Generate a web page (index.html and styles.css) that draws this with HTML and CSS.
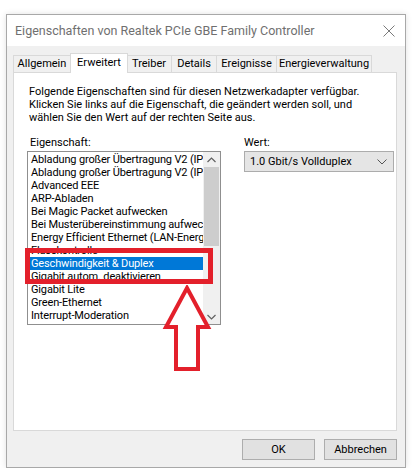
FILE: index.html
```html
<!DOCTYPE html>
<html lang="de">
<head>
    <meta charset="UTF-8">
    <meta name="viewport" content="width=device-width, initial-scale=1.0">
    <title>Eigenschaften von Realtek PCIe GBE Family Controller</title>
    <link rel="stylesheet" href="styles.css">
</head>
<body>

    <div class="window">
        <!-- Title bar -->
        <div class="titlebar">
            <span class="title">Eigenschaften von Realtek PCIe GBE Family Controller</span>
            <svg class="close" width="12" height="12" viewBox="0 0 12 12">
                <path d="M0.5 0.5 L11.5 11.5 M11.5 0.5 L0.5 11.5" stroke="#7a7a7a" stroke-width="1" fill="none"/>
            </svg>
        </div>

        <div class="body">
            <div class="tabs">
                <div class="tab t-allgemein">Allgemein</div>
                <div class="tab active t-erweitert">Erweitert</div>
                <div class="tab t-treiber">Treiber</div>
                <div class="tab t-details">Details</div>
                <div class="tab t-ereignisse">Ereignisse</div>
                <div class="tab t-energie">Energieverwaltung</div>
            </div>

            <div class="panel">
                <p class="desc">Folgende Eigenschaften sind für diesen Netzwerkadapter verfügbar.<br>
                Klicken Sie links auf die Eigenschaft, die geändert werden soll, und<br>
                wählen Sie den Wert auf der rechten Seite aus.</p>

                <div class="columns">
                    <div class="col-left">
                        <div class="label">Eigenschaft:</div>
                        <div class="listbox">
                            <ul class="items">
                                <li>Abladung großer Übertragung V2 (IPv4)</li>
                                <li>Abladung großer Übertragung V2 (IPv6)</li>
                                <li>Advanced EEE</li>
                                <li>ARP-Abladen</li>
                                <li>Bei Magic Packet aufwecken</li>
                                <li>Bei Musterübereinstimmung aufwecken</li>
                                <li>Energy Efficient Ethernet (LAN-Energiesparmodus)</li>
                                <li>Flusskontrolle</li>
                                <li class="selected">Geschwindigkeit &amp; Duplex</li>
                                <li>Gigabit autom. deaktivieren</li>
                                <li>Gigabit Lite</li>
                                <li>Green-Ethernet</li>
                                <li>Interrupt-Moderation</li>
                            </ul>
                            <div class="scrollbar">
                                <div class="arrow">
                                    <svg width="9" height="6" viewBox="0 0 9 6"><path d="M0.5 5 L4.5 1 L8.5 5" stroke="#606060" stroke-width="1.2" fill="none"/></svg>
                                </div>
                                <div class="track">
                                    <div class="thumb"></div>
                                </div>
                                <div class="arrow">
                                    <svg width="9" height="6" viewBox="0 0 9 6"><path d="M0.5 1 L4.5 5 L8.5 1" stroke="#606060" stroke-width="1.2" fill="none"/></svg>
                                </div>
                            </div>
                        </div>
                    </div>

                    <div class="col-right">
                        <div class="label">Wert:</div>
                        <div class="dropdown">
                            <span>1.0 Gbit/s Vollduplex</span>
                            <svg width="10" height="6" viewBox="0 0 10 6"><path d="M0.5 0.5 L5 5 L9.5 0.5" stroke="#555" stroke-width="1" fill="none"/></svg>
                        </div>
                    </div>
                </div>
            </div>

            <div class="buttons">
                <button class="btn">OK</button>
                <button class="btn">Abbrechen</button>
            </div>
        </div>
    </div>

    <!-- Red markup drawn over the screenshot -->
    <div class="highlight-box"></div>
    <svg class="up-arrow" width="52" height="90" viewBox="0 0 52 90">
        <polygon points="26,3 47,42 37,42 37,84 15,84 15,42 5,42" fill="#fff" stroke="#e3202b" stroke-width="4" stroke-linejoin="miter"/>
    </svg>

</body>
</html>
```

FILE: styles.css
```css
body {
    margin: 0;
    background-color: #fff;
    font-family: "Segoe UI", Roboto, sans-serif;
    font-size: 11px;
    color: #000;
}

.window {
    margin: 14px 0 0 6px;
    width: 398px;
    height: 452px;
    border: 1px solid #a8a8a8;
    box-shadow: 0 0 6px rgba(0, 0, 0, 0.12);
    display: flex;
    flex-direction: column;
}

.titlebar {
    flex-shrink: 0;
    height: 31px;
    background: #fff;
    display: flex;
    align-items: center;
    justify-content: space-between;
    padding: 0 10px 0 8px;
}

.title {
    font-size: 12.5px;
    color: #6f6f6f;
}

.close {
    display: block;
}

.body {
    flex: 1;
    background: #f0f0f0;
    padding: 7px 8px 0 6px;
    display: flex;
    flex-direction: column;
}

.tabs {
    display: flex;
    align-items: flex-end;
    height: 19px;
    flex-shrink: 0;
    position: relative;
    z-index: 1;
}

.tab {
    height: 16px;
    line-height: 16px;
    border: 1px solid #d9d9d9;
    border-bottom: none;
    border-left: none;
    background: #f0f0f0;
    text-align: center;
}

.t-allgemein { width: 56px; border-left: 1px solid #d9d9d9; }
.t-erweitert { width: 56px; }
.t-treiber { width: 44px; }
.t-details { width: 44px; }
.t-ereignisse { width: 59px; }
.t-energie { width: 94px; }

.tab.active {
    height: 19px;
    line-height: 17px;
    background: #fff;
    margin-bottom: -1px;
    border-left: 1px solid #d9d9d9;
    margin-left: -1px;
    margin-right: -1px;
    position: relative;
}

.panel {
    box-sizing: border-box;
    flex-shrink: 0;
    height: 359px;
    background: #fff;
    border: 1px solid #d9d9d9;
    padding: 12px 0 0 15px;
}

.desc {
    margin: 0;
    line-height: 13px;
}

.columns {
    display: flex;
    margin-top: 12px;
}

.label {
    height: 15px;
    line-height: 13px;
}

.col-left {
    width: 194px;
}

.col-right {
    margin-left: 21px;
}

.col-left .label {
    padding-left: 1px;
}

.listbox {
    margin-left: -2px;
    width: 192px;
    height: 172px;
    border: 1px solid #8f8f8f;
    display: flex;
    overflow: hidden;
}

.items {
    list-style: none;
    margin: 0;
    padding: 1px 0 0 2px;
    flex: 1;
    overflow: hidden;
}

.items li {
    height: 13px;
    line-height: 13px;
    padding-left: 1px;
    letter-spacing: -0.15px;
    white-space: nowrap;
    overflow: hidden;
}

.items li.selected {
    background: #0078d7;
    color: #fff;
}

.scrollbar {
    width: 17px;
    background: #f0f0f0;
    display: flex;
    flex-direction: column;
}

.arrow {
    height: 15px;
    display: flex;
    align-items: center;
    justify-content: center;
}

.track {
    flex: 1;
    padding: 0 1px;
}

.thumb {
    height: 79px;
    background: #cdcdcd;
}

.dropdown {
    box-sizing: border-box;
    width: 150px;
    height: 21px;
    background: #e5e5e5;
    border: 1px solid #acacac;
    display: flex;
    align-items: center;
    justify-content: space-between;
    padding: 0 6px 0 5px;
}

.buttons {
    display: flex;
    justify-content: flex-end;
    gap: 9px;
    margin-top: 8px;
}

.btn {
    width: 73px;
    height: 21px;
    background: #e1e1e1;
    border: 1px solid #adadad;
    font-family: inherit;
    font-size: 11px;
    padding: 0;
    color: #000;
}

.highlight-box {
    position: absolute;
    left: 25px;
    top: 248px;
    width: 178px;
    height: 26px;
    border: 5px solid #e3202b;
}

.up-arrow {
    position: absolute;
    left: 161px;
    top: 285px;
}
```
